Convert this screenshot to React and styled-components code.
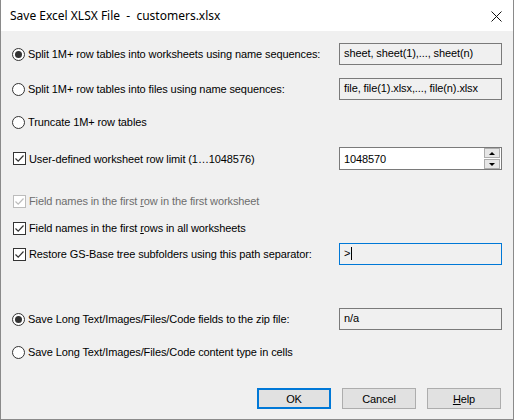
import React from "react";
import styled, { createGlobalStyle, css } from "styled-components";

const Global = createGlobalStyle`
  html, body { margin: 0; padding: 0; background: #f0f0f0; }
  body { width: 514px; height: 420px; overflow: hidden; }
  * { box-sizing: border-box; }
`;

const Window = styled.div`
  width: 514px;
  height: 420px;
  background: #f0f0f0;
  border: 1px solid #8a8a8a;
  border-top: none;
  display: flex;
  flex-direction: column;
  font-family: "Liberation Sans", Arial, sans-serif;
  font-size: 11px;
  letter-spacing: -0.1px;
  color: #000;
`;

const TitleBar = styled.div`
  height: 31px;
  background: #fff;
  display: flex;
  align-items: center;
  justify-content: space-between;
  padding: 0 10px 0 9px;
  font-family: "Noto Sans", "Open Sans", sans-serif;
  font-size: 12px;
  letter-spacing: 0;
  white-space: pre;
`;

const CloseIcon = styled.svg`
  width: 11px;
  height: 11px;
  margin-top: 2px;
  margin-right: 1px;
`;

const Body = styled.div`
  padding: 12px 11px 0 11px;
  display: flex;
  flex-direction: column;
  flex: 1;
`;

const Row = styled.div`
  display: grid;
  grid-template-columns: 327px 163px;
  height: 22px;
  align-items: center;
  margin-top: ${(p) => p.$mt || 0}px;
`;

const Label = styled.label`
  display: flex;
  align-items: center;
  gap: 3px;
  white-space: nowrap;
  color: ${(p) => (p.$disabled ? "#6d6d6d" : "#000")};
`;

const RadioCircle = styled.span`
  width: 13px;
  height: 13px;
  border-radius: 50%;
  border: 1px solid #333;
  background: #fff;
  display: flex;
  align-items: center;
  justify-content: center;
  flex-shrink: 0;
  &::after {
    content: "";
    width: 7px;
    height: 7px;
    border-radius: 50%;
    background: #333;
    display: ${(p) => (p.$on ? "block" : "none")};
  }
`;

const CheckBox = styled.span`
  width: 13px;
  height: 13px;
  margin-left: 1px;
  border: 1px solid ${(p) => (p.$disabled ? "#bcbcbc" : "#333")};
  background: #fff;
  display: flex;
  align-items: center;
  justify-content: center;
  flex-shrink: 0;
  svg { width: 11px; height: 11px; }
  svg path { stroke: ${(p) => (p.$disabled ? "#bcbcbc" : "#333")}; }
`;

const Field = styled.div`
  height: 22px;
  border: 1px solid ${(p) => (p.$focus ? "#0078d7" : "#7a7a7a")};
  background: ${(p) => (p.$white ? "#fff" : "#f0f0f0")};
  display: flex;
  align-items: center;
  padding: 0 0 2px 4px;
  white-space: nowrap;
  overflow: hidden;
`;

const Caret = styled.span`
  display: inline-block;
  width: 1px;
  height: 13px;
  background: #000;
  margin-left: 1px;
`;

const SpinField = styled(Field)`
  height: 23px;
  padding-right: 0;
  justify-content: space-between;
  padding-bottom: 0;
`;

const SpinButtons = styled.div`
  display: flex;
  flex-direction: column;
  gap: 1px;
  margin-right: 1px;
  align-self: center;
`;

const SpinBtn = styled.div`
  width: 16px;
  height: 10px;
  border: 1px solid #adadad;
  background: #e6e6e6;
  display: flex;
  align-items: center;
  justify-content: center;
  &::after {
    content: "";
    border-left: 3px solid transparent;
    border-right: 3px solid transparent;
    ${(p) =>
      p.$up
        ? css`border-bottom: 3px solid #000;`
        : css`border-top: 3px solid #000;`}
  }
`;

const Buttons = styled.div`
  display: flex;
  justify-content: flex-end;
  gap: 11px;
  margin-top: 25px;
  padding-right: 1px;
`;

const Button = styled.div`
  width: 74px;
  height: 21px;
  background: #e1e1e1;
  border: ${(p) => (p.$default ? "2px solid #0078d7" : "1px solid #adadad")};
  display: flex;
  align-items: center;
  justify-content: center;
  u { text-decoration: underline; }
`;

const Check = () => (
  <svg viewBox="0 0 11 11">
    <path d="M1.5 5.5 L4.2 8.2 L9.5 2.5" fill="none" strokeWidth="1.2" />
  </svg>
);

const Radio = ({ on, children }) => (
  <Label>
    <RadioCircle $on={on} />
    <span>{children}</span>
  </Label>
);

const Checked = ({ disabled, children }) => (
  <Label $disabled={disabled}>
    <CheckBox $disabled={disabled}>
      <Check />
    </CheckBox>
    <span>{children}</span>
  </Label>
);

export default function App() {
  return (
    <>
      <Global />
      <Window>
        <TitleBar>
          <span>Save Excel XLSX File  -  customers.xlsx</span>
          <CloseIcon viewBox="0 0 11 11">
            <path d="M0.5 0.5 L10.5 10.5 M10.5 0.5 L0.5 10.5" stroke="#111" strokeWidth="1" />
          </CloseIcon>
        </TitleBar>
        <Body>
          <Row>
            <Radio on>Split 1M+ row tables into worksheets using name sequences:</Radio>
            <Field>sheet, sheet(1),..., sheet(n)</Field>
          </Row>
          <Row $mt={13}>
            <Radio>Split 1M+ row tables into files using name sequences:</Radio>
            <Field>file, file(1).xlsx,..., file(n).xlsx</Field>
          </Row>
          <Row $mt={11}>
            <Radio>Truncate 1M+ row tables</Radio>
          </Row>
          <Row $mt={14}>
            <Checked>User-defined worksheet row limit (1…1048576)</Checked>
            <SpinField $white>
              <span>1048570</span>
              <SpinButtons>
                <SpinBtn $up />
                <SpinBtn />
              </SpinButtons>
            </SpinField>
          </Row>
          <Row $mt={21}>
            <Checked disabled>
              Field names in the first <u>r</u>ow in the first worksheet
            </Checked>
          </Row>
          <Row $mt={5}>
            <Checked>
              Field names in the first <u>r</u>ows in all worksheets
            </Checked>
          </Row>
          <Row $mt={4}>
            <Checked>Restore GS-Base tree subfolders using this path separator:</Checked>
            <Field $focus>
              <span>&gt;</span>
              <Caret />
            </Field>
          </Row>
          <Row $mt={43}>
            <Radio on>Save Long Text/Images/Files/Code fields to the zip file:</Radio>
            <Field>n/a</Field>
          </Row>
          <Row $mt={11}>
            <Radio>Save Long Text/Images/Files/Code content type in cells</Radio>
          </Row>
          <Buttons>
            <Button $default>OK</Button>
            <Button>Cancel</Button>
            <Button>
              <span>
                <u>H</u>elp
              </span>
            </Button>
          </Buttons>
        </Body>
      </Window>
    </>
  );
}
